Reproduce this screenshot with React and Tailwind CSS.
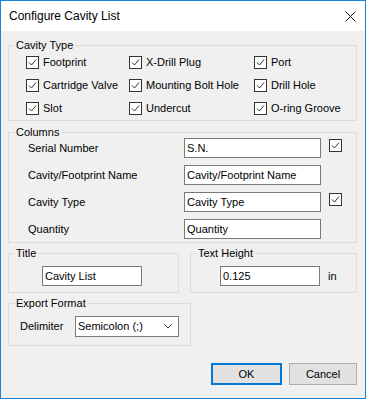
import React from "react";

function Check() {
  return (
    <span className="inline-flex w-[13px] h-[13px] shrink-0 border border-[#333333] bg-white items-center justify-center">
      <svg width="11" height="11" viewBox="0 0 11 11">
        <polyline points="2,5.5 4.5,8 9,2.5" fill="none" stroke="#333333" strokeWidth="1" />
      </svg>
    </span>
  );
}

function CheckItem({ label }) {
  return (
    <div className="flex items-center h-[23px] gap-[4px]">
      <Check />
      <span>{label}</span>
    </div>
  );
}

function Group({ title, className, children }) {
  return (
    <fieldset className={`border border-[#dcdcdc] px-0 ${className}`}>
      <legend className="ml-[6px] px-[1px] leading-[12px]">{title}</legend>
      {children}
    </fieldset>
  );
}

function TextBox({ value, className }) {
  return (
    <div
      className={`h-[20px] border border-[#7a7a7a] bg-white flex items-center pl-[2px] whitespace-nowrap overflow-hidden ${className}`}
    >
      {value}
    </div>
  );
}

const columns = [
  { label: "Serial Number", value: "S.N.", check: true },
  { label: "Cavity/Footprint Name", value: "Cavity/Footprint Name", check: false },
  { label: "Cavity Type", value: "Cavity Type", check: true },
  { label: "Quantity", value: "Quantity", check: false },
];

export default function App() {
  return (
    <div className="w-[366px] h-[399px] border border-[#1883d7] bg-[#f0f0f0] flex flex-col font-['Liberation_Sans',Arial,sans-serif] text-[11px] text-black">
      <div className="h-[30px] bg-white flex items-center justify-between pl-[8px] pr-[9px] shrink-0">
        <span className="text-[12px]">Configure Cavity List</span>
        <svg width="11" height="11" viewBox="0 0 11 11">
          <path d="M0.5 0.5 L10.5 10.5 M10.5 0.5 L0.5 10.5" stroke="#111" strokeWidth="1" />
        </svg>
      </div>

      <div className="flex-1 pl-[7px] pr-[8px] pt-[8px] flex flex-col">
        <Group title="Cavity Type" className="pb-0">
          <div className="grid grid-cols-[103px_125px_1fr] pl-[17px]">
            <CheckItem label="Footprint" />
            <CheckItem label="X-Drill Plug" />
            <CheckItem label="Port" />
            <CheckItem label="Cartridge Valve" />
            <CheckItem label="Mounting Bolt Hole" />
            <CheckItem label="Drill Hole" />
            <CheckItem label="Slot" />
            <CheckItem label="Undercut" />
            <CheckItem label="O-ring Groove" />
          </div>
        </Group>

        <Group title="Columns" className="mt-[5px] pb-[3px]">
          <div className="flex flex-col pl-[19px]">
            {columns.map((c) => (
              <div key={c.label} className="flex items-start h-[27px] last:h-[20px]">
                <div className="w-[156px] h-[20px] flex items-center">{c.label}</div>
                <TextBox value={c.value} className="w-[137px]" />
                {c.check && (
                  <div className="ml-[8px] mt-[1px]">
                    <Check />
                  </div>
                )}
              </div>
            ))}
          </div>
        </Group>

        <div className="flex gap-[11px] mt-[4px]">
          <Group title="Title" className="w-[171px] h-[46px]">
            <div className="pt-[7px] pl-[33px]">
              <TextBox value="Cavity List" className="w-[100px] h-[19px]" />
            </div>
          </Group>
          <Group title="Text Height" className="flex-1 h-[46px]">
            <div className="pt-[7px] pl-[29px] flex items-center gap-[8px]">
              <TextBox value="0.125" className="w-[100px] h-[19px]" />
              <span>in</span>
            </div>
          </Group>
        </div>

        <Group title="Export Format" className="mt-[4px] w-[183px] h-[49px]">
          <div className="pt-[7px] pl-[11px] flex items-center">
            <span className="w-[55px]">Delimiter</span>
            <div className="w-[104px] h-[21px] border border-[#7a7a7a] bg-white flex items-center justify-between pl-[2px] pr-[6px]">
              <span>Semicolon (;)</span>
              <svg width="8" height="5" viewBox="0 0 8 5">
                <polyline points="0.5,0.5 4,4 7.5,0.5" fill="none" stroke="#333" strokeWidth="1" />
              </svg>
            </div>
          </div>
        </Group>

        <div className="flex justify-end gap-[7px] mt-[17px]">
          <button className="w-[71px] h-[22px] bg-[#e1e1e1] border-2 border-[#0078d7] flex items-center justify-center">
            OK
          </button>
          <button className="w-[68px] h-[22px] bg-[#e1e1e1] border border-[#adadad] flex items-center justify-center">
            Cancel
          </button>
        </div>
      </div>
    </div>
  );
}
